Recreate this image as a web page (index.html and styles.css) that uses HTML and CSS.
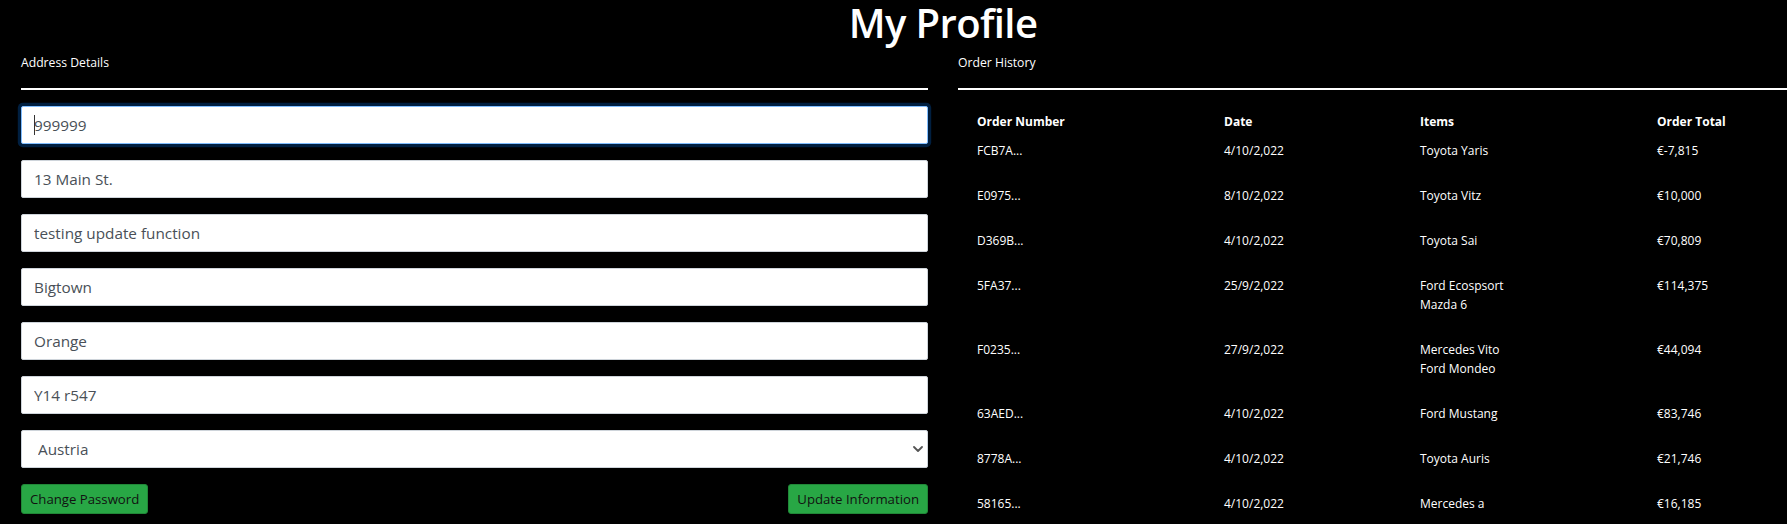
FILE: index.html
```html
<!DOCTYPE html>
<html lang="en">
<head>
<meta charset="utf-8">
<title>My Profile</title>
<link rel="stylesheet" href="styles.css">
</head>
<body>
<div class="page">
  <h1 class="title">My Profile</h1>
  <div class="columns">
    <section class="col">
      <h6 class="section-label">Address Details</h6>
      <hr class="rule">
      <form class="address-form">
        <div class="field field-focused">
          <input class="form-input" type="text" value="999999">
          <span class="caret"></span>
        </div>
        <input class="form-input" type="text" value="13 Main St.">
        <input class="form-input" type="text" value="testing update function">
        <input class="form-input" type="text" value="Bigtown">
        <input class="form-input" type="text" value="Orange">
        <input class="form-input" type="text" value="Y14 r547">
        <div class="field">
          <select class="form-input form-select">
            <option>Austria</option>
          </select>
          <svg class="chevron" viewBox="0 0 10 6" aria-hidden="true"><path d="M1 1 L5 5 L9 1" fill="none" stroke="#555" stroke-width="1.8" stroke-linecap="round" stroke-linejoin="round"/></svg>
        </div>
        <div class="actions">
          <button type="button" class="btn">Change Password</button>
          <button type="button" class="btn">Update Information</button>
        </div>
      </form>
    </section>
    <section class="col">
      <h6 class="section-label">Order History</h6>
      <hr class="rule">
      <table class="orders">
        <colgroup>
          <col class="c1"><col class="c2"><col class="c3"><col class="c4">
        </colgroup>
        <thead>
          <tr><th>Order Number</th><th>Date</th><th>Items</th><th>Order Total</th></tr>
        </thead>
        <tbody>
          <tr><td>FCB7A...</td><td>4/10/2,022</td><td><div>Toyota Yaris</div></td><td>€-7,815</td></tr>
          <tr><td>E0975...</td><td>8/10/2,022</td><td><div>Toyota Vitz</div></td><td>€10,000</td></tr>
          <tr><td>D369B...</td><td>4/10/2,022</td><td><div>Toyota Sai</div></td><td>€70,809</td></tr>
          <tr><td>5FA37...</td><td>25/9/2,022</td><td><div>Ford Ecospsort</div><div>Mazda 6</div></td><td>€114,375</td></tr>
          <tr><td>F0235...</td><td>27/9/2,022</td><td><div>Mercedes Vito</div><div>Ford Mondeo</div></td><td>€44,094</td></tr>
          <tr><td>63AED...</td><td>4/10/2,022</td><td><div>Ford Mustang</div></td><td>€83,746</td></tr>
          <tr><td>8778A...</td><td>4/10/2,022</td><td><div>Toyota Auris</div></td><td>€21,746</td></tr>
          <tr><td>58165...</td><td>4/10/2,022</td><td><div>Mercedes a</div></td><td>€16,185</td></tr>
        </tbody>
      </table>
    </section>
  </div>
</div>
</body>
</html>
```
FILE: styles.css
```css
html, body {
  margin: 0;
  padding: 0;
  background: #000;
  overflow: hidden;
  height: 100%;
}

body {
  font-family: "Open Sans", "Noto Sans", sans-serif;
  color: #fff;
}

.page {
  width: 1885px;
  box-sizing: border-box;
  padding: 0 20px 0 21px;
}

.title {
  width: fit-content;
  margin: 0 auto;
  font-size: 40px;
  line-height: 45px;
  font-weight: 600;
  letter-spacing: -0.6px;
}

.columns {
  display: grid;
  grid-template-columns: 907px 907px;
  column-gap: 30px;
}

.section-label {
  margin: 8px 0 0;
  font-size: 12.2px;
  line-height: 19px;
  font-weight: 400;
}

.rule {
  margin: 16px 0;
  height: 0;
  border: 0;
  border-top: 2px solid #fff;
}

.address-form {
  display: flex;
  flex-direction: column;
  gap: 16px;
}

.form-input {
  display: block;
  width: 100%;
  height: 38px;
  box-sizing: border-box;
  padding: 0 12px;
  font-family: "Open Sans", "Noto Sans", sans-serif;
  font-size: 15.3px;
  color: #495057;
  background: #fff;
  border: 1px solid #ced4da;
  border-radius: 2px;
  outline: none;
}

.field {
  position: relative;
}

.field-focused .form-input {
  border-color: #80bdff;
  box-shadow: 0 0 0 3.2px rgb(0, 31, 64);
}

.caret {
  position: absolute;
  left: 13px;
  top: 9px;
  width: 1px;
  height: 20px;
  background: #333;
}

.form-select {
  appearance: none;
  -webkit-appearance: none;
  padding-left: 16px;
}

.chevron {
  position: absolute;
  right: 5px;
  top: 16px;
  width: 10px;
  height: 6px;
  pointer-events: none;
}

.actions {
  display: flex;
  justify-content: space-between;
}

.btn {
  height: 30px;
  padding: 0 8px;
  font-family: "Open Sans", "Noto Sans", sans-serif;
  font-size: 13.2px;
  color: #111;
  background: #28a745;
  border: 1px solid #218838;
  border-radius: 3px;
}

.orders {
  margin: 17px 0 0 11px;
  border-collapse: collapse;
  table-layout: fixed;
  width: 896px;
  font-size: 12px;
  line-height: 19px;
}

.c1 { width: 247px; }
.c2 { width: 196px; }
.c3 { width: 237px; }
.c4 { width: 216px; }

.orders th {
  text-align: left;
  font-weight: 700;
  padding: 5px 8px;
  vertical-align: top;
}

.orders td {
  padding: 5px 8px 21px;
  vertical-align: top;
}
```
